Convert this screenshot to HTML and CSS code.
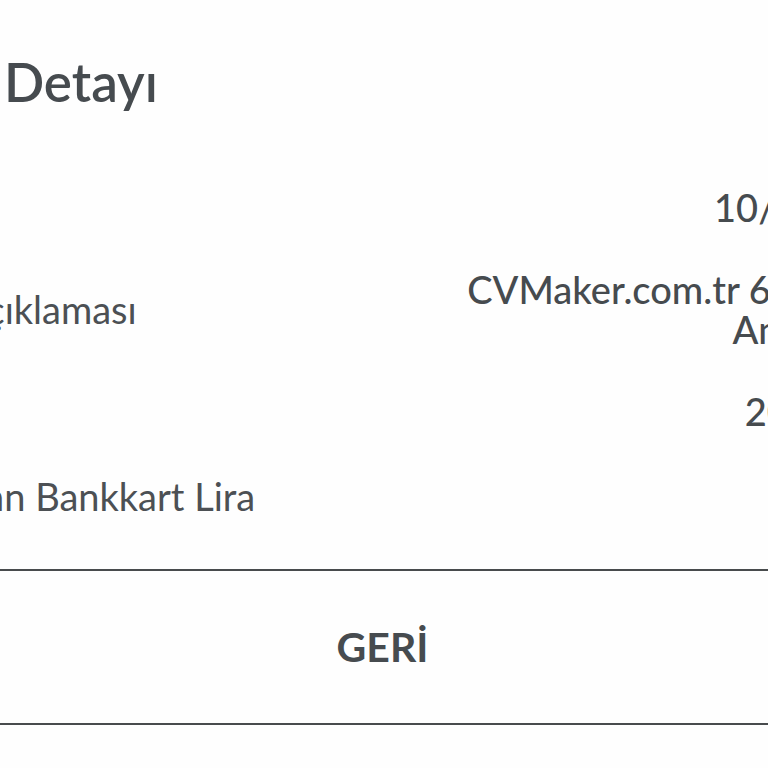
FILE: index.html
```html
<!DOCTYPE html>
<html lang="tr">
  <head>
    <meta charset="UTF-8" />
    <meta name="viewport" content="width=device-width, initial-scale=1.0" />
    <title>İşlem Detayı</title>
    <link rel="stylesheet" href="styles.css">
  </head>
  <body>
    <div class="screen">
      <h1 class="title">İşlem Detayı</h1>
      <ul class="details">
        <li>
          <span class="label">Tarih</span>
          <span class="value">10/08/2023</span>
        </li>
        <li>
          <span class="label">İşlem Açıklaması</span>
          <span class="value">CVMaker.com.tr 65463210<br>Amsterdam</span>
        </li>
        <li>
          <span class="label">Tutar</span>
          <span class="value">20,00 EUR</span>
        </li>
        <li>
          <span class="label">Kazanılan Bankkart Lira</span>
          <span class="value">0,00</span>
        </li>
      </ul>
      <div class="actions">
        <button class="back">GERİ</button>
      </div>
    </div>
  </body>
</html>
```

FILE: styles.css
```css
* { box-sizing: border-box; }
html, body { margin: 0; height: 100%; background: #fefefe; overflow: hidden; }
body { font-family: Lato, "Open Sans", sans-serif; color: #464b4f; }
.screen { width: 1059px; margin-left: -134px; padding-top: 50px; }
.title { margin: 0; padding-left: 2px; font-size: 53px; font-weight: 600; line-height: 1.2; }
.details { list-style: none; margin: 73px 0 0; padding: 0; }
.details li { display: flex; align-items: center; justify-content: space-between; margin-bottom: 42px; }
.details li:nth-child(3) { margin-bottom: 45px; }
.details li:last-child { margin-bottom: 0; }
.label { font-size: 38px; font-weight: 400; line-height: 40px; color: #4c5054; }
.value { font-size: 38px; font-weight: 500; line-height: 40px; text-align: right; }
.actions { margin-top: 53px; border-top: 2px solid #484b4d; border-bottom: 2px solid #484b4d; }
.back { display: block; width: calc(100% - 26px); height: 152px; padding: 0; border: 0; background: none; font-family: inherit; font-size: 41px; font-weight: 700; color: #464b4f; cursor: pointer; }
```
